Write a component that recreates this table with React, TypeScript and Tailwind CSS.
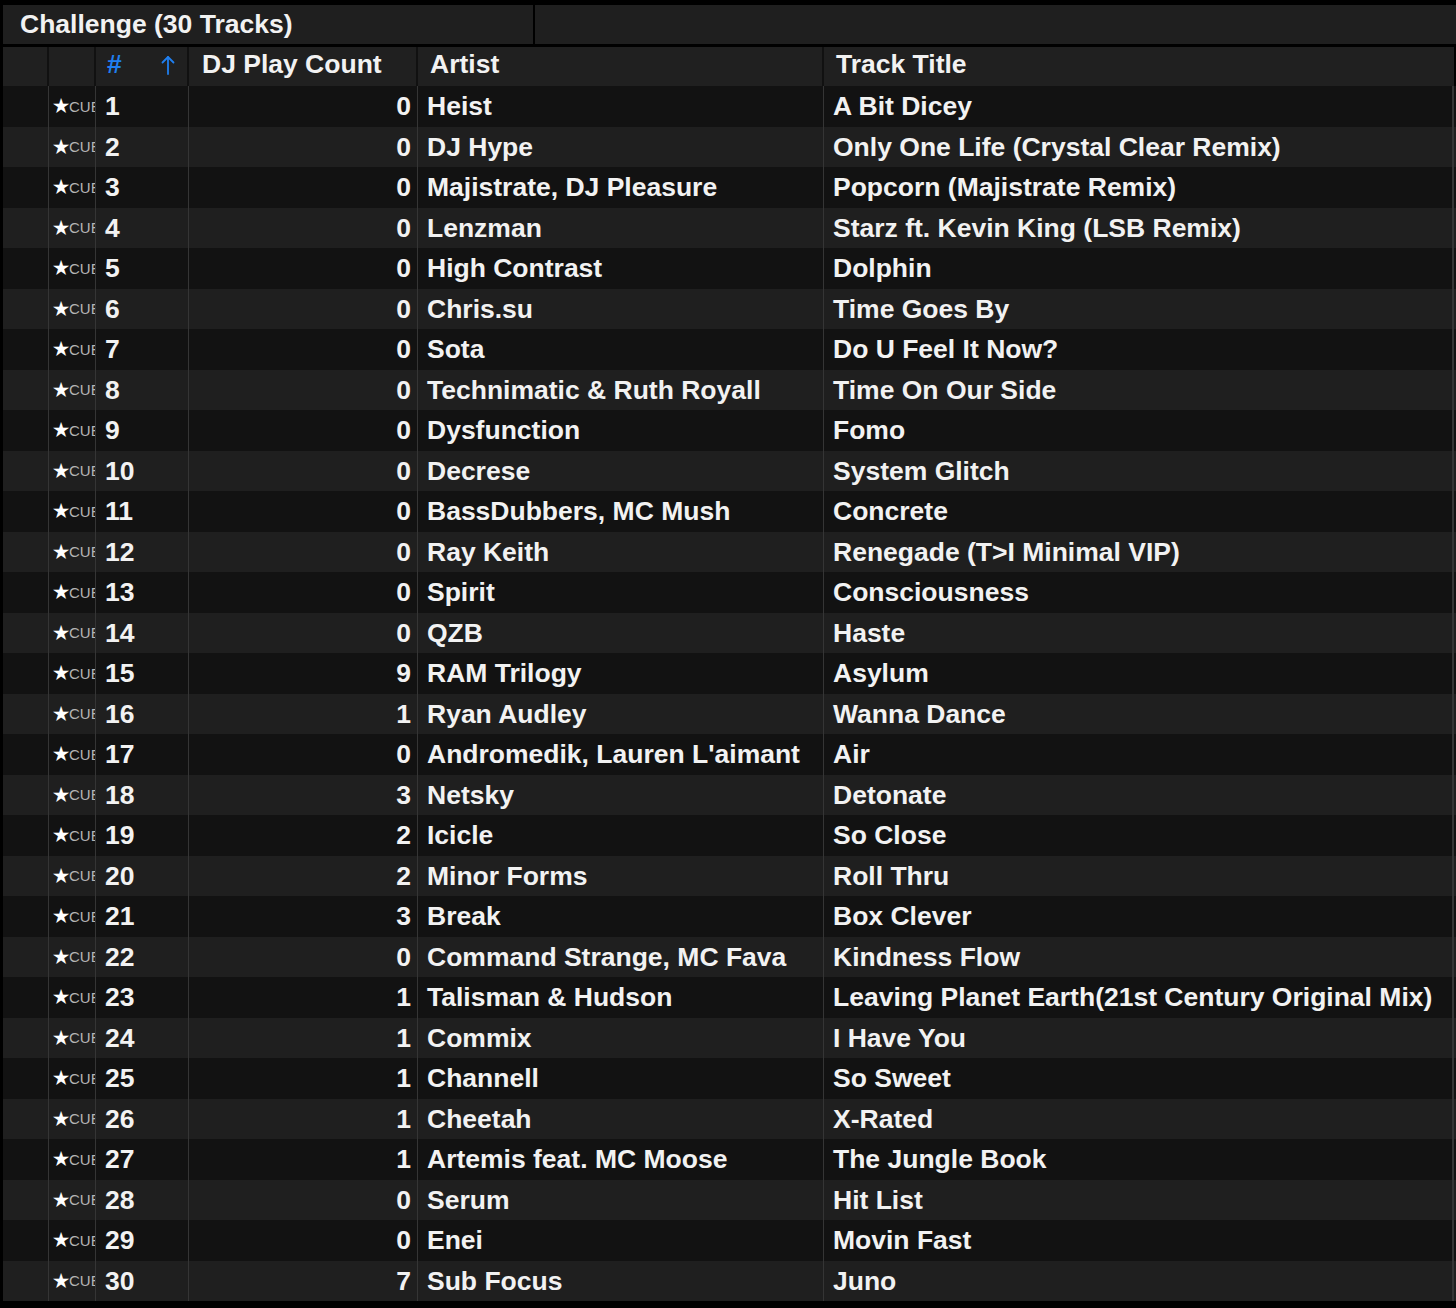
import React from 'react'

type Track = { count: number; artist: string; title: string }

const tracks: Track[] = [
  { count: 0, artist: 'Heist', title: 'A Bit Dicey' },
  { count: 0, artist: 'DJ Hype', title: 'Only One Life (Crystal Clear Remix)' },
  { count: 0, artist: 'Majistrate, DJ Pleasure', title: 'Popcorn (Majistrate Remix)' },
  { count: 0, artist: 'Lenzman', title: 'Starz ft. Kevin King (LSB Remix)' },
  { count: 0, artist: 'High Contrast', title: 'Dolphin' },
  { count: 0, artist: 'Chris.su', title: 'Time Goes By' },
  { count: 0, artist: 'Sota', title: 'Do U Feel It Now?' },
  { count: 0, artist: 'Technimatic & Ruth Royall', title: 'Time On Our Side' },
  { count: 0, artist: 'Dysfunction', title: 'Fomo' },
  { count: 0, artist: 'Decrese', title: 'System Glitch' },
  { count: 0, artist: 'BassDubbers, MC Mush', title: 'Concrete' },
  { count: 0, artist: 'Ray Keith', title: 'Renegade (T>I Minimal VIP)' },
  { count: 0, artist: 'Spirit', title: 'Consciousness' },
  { count: 0, artist: 'QZB', title: 'Haste' },
  { count: 9, artist: 'RAM Trilogy', title: 'Asylum' },
  { count: 1, artist: 'Ryan Audley', title: 'Wanna Dance' },
  { count: 0, artist: "Andromedik, Lauren L'aimant", title: 'Air' },
  { count: 3, artist: 'Netsky', title: 'Detonate' },
  { count: 2, artist: 'Icicle', title: 'So Close' },
  { count: 2, artist: 'Minor Forms', title: 'Roll Thru' },
  { count: 3, artist: 'Break', title: 'Box Clever' },
  { count: 0, artist: 'Command Strange, MC Fava', title: 'Kindness Flow' },
  { count: 1, artist: 'Talisman & Hudson', title: 'Leaving Planet Earth(21st Century Original Mix)' },
  { count: 1, artist: 'Commix', title: 'I Have You' },
  { count: 1, artist: 'Channell', title: 'So Sweet' },
  { count: 1, artist: 'Cheetah', title: 'X-Rated' },
  { count: 1, artist: 'Artemis feat. MC Moose', title: 'The Jungle Book' },
  { count: 0, artist: 'Serum', title: 'Hit List' },
  { count: 0, artist: 'Enei', title: 'Movin Fast' },
  { count: 7, artist: 'Sub Focus', title: 'Juno' },
]

const SortArrow = () => (
  <svg width="14" height="20" viewBox="0 0 14 20" fill="none" stroke="#1f7ff0" strokeWidth="1.8" strokeLinecap="round" strokeLinejoin="round">
    <path d="M7 2v17" />
    <path d="M1.5 7.5L7 2l5.5 5.5" />
  </svg>
)

const TrackRow = ({ track, index }: { track: Track; index: number }) => {
  const bg = index % 2 === 0 ? 'bg-[#121212]' : 'bg-[#1f1f1f]'
  return (
    <div className={`flex h-[40.5px] ${bg}`}>
      <div className="w-[46px] shrink-0 border-r border-[#353535]" />
      <div className="w-[47px] shrink-0 border-r border-[#353535] flex items-center pl-[4px] overflow-hidden whitespace-nowrap">
        <span className="text-white text-[18px] leading-none">★</span>
        <span className="text-[#b4b4b4] text-[15px] leading-none font-normal">CUE</span>
      </div>
      <div className="w-[93px] shrink-0 border-r border-[#353535] flex items-center pl-[9px]">{index + 1}</div>
      <div className="w-[229px] shrink-0 border-r border-[#353535] flex items-center justify-end pr-[6px]">{track.count}</div>
      <div className="w-[406px] shrink-0 border-r border-[#353535] flex items-center pl-[9px] whitespace-nowrap overflow-hidden">{track.artist}</div>
      <div className="w-[630px] shrink-0 border-r-2 border-[#353535] flex items-center pl-[9px] whitespace-nowrap overflow-hidden">{track.title}</div>
    </div>
  )
}

export default function App() {
  return (
    <div
      className="w-[1456px] h-[1308px] bg-black pt-[5px] pl-[3px] text-[#f2f2f2] font-bold text-[26.5px] leading-none overflow-hidden"
      style={{ fontFamily: '"Liberation Sans", Arial, sans-serif' }}
    >
      <div className="flex h-[39px] gap-[2px]">
        <div className="w-[530px] bg-[#1f1f1f] flex items-center pl-[17px]">Challenge (30 Tracks)</div>
        <div className="flex-1 bg-[#1f1f1f]" />
      </div>
      <div className="flex h-[39px] mt-[3px] w-[1451px]">
        <div className="w-[46px] shrink-0 bg-[#202020] border-r-2 border-[#111]" />
        <div className="w-[47px] shrink-0 bg-[#202020] border-r-2 border-[#111]" />
        <div className="w-[93px] shrink-0 bg-[#202020] border-r-2 border-[#111] flex items-center pb-[4px] pl-[11px] pr-[12px] justify-between text-[#1f7ff0]">
          <span>#</span>
          <SortArrow />
        </div>
        <div className="w-[229px] shrink-0 bg-[#202020] border-r-2 border-[#111] flex items-center pb-[4px] pl-[13px]">DJ Play Count</div>
        <div className="w-[406px] shrink-0 bg-[#202020] border-r-2 border-[#111] flex items-center pb-[4px] pl-[12px]">Artist</div>
        <div className="flex-1 bg-[#202020] flex items-center pb-[4px] pl-[12px]">Track Title</div>
      </div>
      <div className="flex flex-col">
        {tracks.map((t, i) => (
          <TrackRow key={i} track={t} index={i} />
        ))}
      </div>
    </div>
  )
}
